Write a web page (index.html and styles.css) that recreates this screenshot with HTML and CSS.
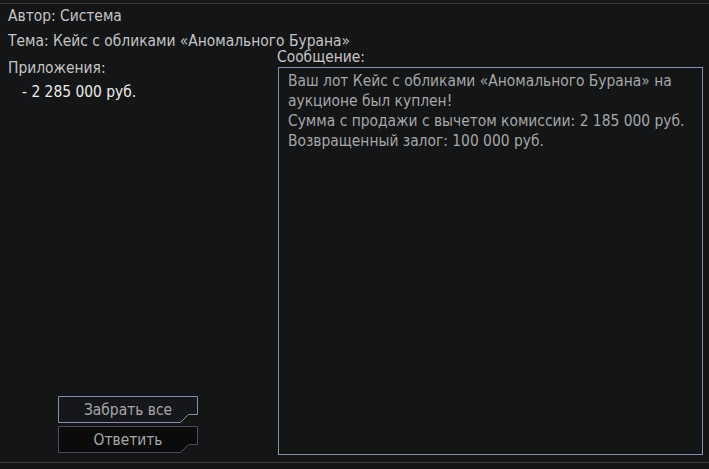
FILE: index.html
```html
<!DOCTYPE html>
<html lang="ru">
<head>
    <meta charset="UTF-8">
    <title>Письмо</title>
    <link rel="stylesheet" href="styles.css">
</head>
<body>
    <div class="mail">
        <!-- шапка письма -->
        <div class="mail-head">
            <div class="row">Автор: Система</div>
            <div class="row subject">Тема: Кейс с обликами «Аномального Бурана»</div>
        </div>

        <div class="mail-body">
            <!-- левая колонка: вложения и кнопки -->
            <div class="attach">
                <div class="row">Приложения:</div>
                <div class="row amount">- 2 285 000 руб.</div>

                <div class="buttons">
                    <div class="btn btn-main">
                        <svg class="btn-bg" width="140" height="27" viewBox="0 0 140 27">
                            <polygon points="0.5,0.5 139.5,0.5 139.5,18.5 130.5,18.5 122.5,26.5 0.5,26.5"></polygon>
                        </svg>
                        <span>Забрать все</span>
                    </div>
                    <div class="btn btn-alt">
                        <svg class="btn-bg" width="140" height="27" viewBox="0 0 140 27">
                            <polygon points="0.5,0.5 139.5,0.5 139.5,18.5 130.5,18.5 122.5,26.5 0.5,26.5"></polygon>
                        </svg>
                        <span>Ответить</span>
                    </div>
                </div>
            </div>

            <!-- правая колонка: текст сообщения -->
            <div class="message">
                <div class="message-label">Сообщение:</div>
                <div class="message-box">
                    <p>Ваш лот Кейс с обликами «Аномального Бурана» на аукционе был куплен!</p>
                    <p>Сумма с продажи с вычетом комиссии: 2 185 000 руб.</p>
                    <p>Возвращенный залог: 100 000 руб.</p>
                </div>
            </div>
        </div>
    </div>
</body>
</html>
```

FILE: styles.css
```css
body {
    margin: 0;
    background-color: #141517;
    font-family: "DejaVu Sans Condensed", "DejaVu Sans", sans-serif;
    font-size: 15.4px;
    color: #c4c4c4;
    overflow: hidden;
}

/* рамка письма */
.mail {
    margin-top: 3px;
    height: 458px;
    border-top: 1px solid #38393b;
    border-bottom: 1px solid #38393b;
    display: flex;
    flex-direction: column;
}

.mail-head {
    padding-left: 8px;
}

.row {
    line-height: 25px;
    white-space: nowrap;
}

.subject {
    margin-bottom: -7px; /* колонка сообщения заходит под тему */
}

.mail-body {
    flex: 1;
    display: grid;
    grid-template-columns: 271px 425px;
    column-gap: 7px;
    min-height: 0;
}

/* левая колонка */
.attach {
    display: flex;
    flex-direction: column;
    padding: 9px 0 9px 8px;
}

.attach .row {
    line-height: 24px;
}

.amount {
    padding-left: 14px;
    color: #ececec;
}

.buttons {
    margin-top: auto;
    margin-left: 50px;
    display: flex;
    flex-direction: column;
    gap: 3px;
}

.btn {
    position: relative;
    width: 140px;
    height: 27px;
    display: flex;
    align-items: center;
    justify-content: center;
    color: #a6a6a6;
}

.btn span {
    position: relative;
}

.btn-bg {
    position: absolute;
    left: 0;
    top: 0;
}

.btn-main polygon {
    fill: #16171b;
    stroke: #8b8bb2;
}

.btn-alt polygon {
    fill: #0b0b0c;
    stroke: #4b4b5e;
}

/* правая колонка */
.message {
    display: flex;
    flex-direction: column;
    padding-bottom: 7px;
}

.message-label {
    line-height: 20px;
    margin-left: -1px;
}

.message-box {
    flex: 1;
    border: 1px solid #8e8eb2;
    padding: 3px 9px;
    color: #a6a6a6;
    line-height: 20px;
}

.message-box p {
    margin: 0;
}
```
